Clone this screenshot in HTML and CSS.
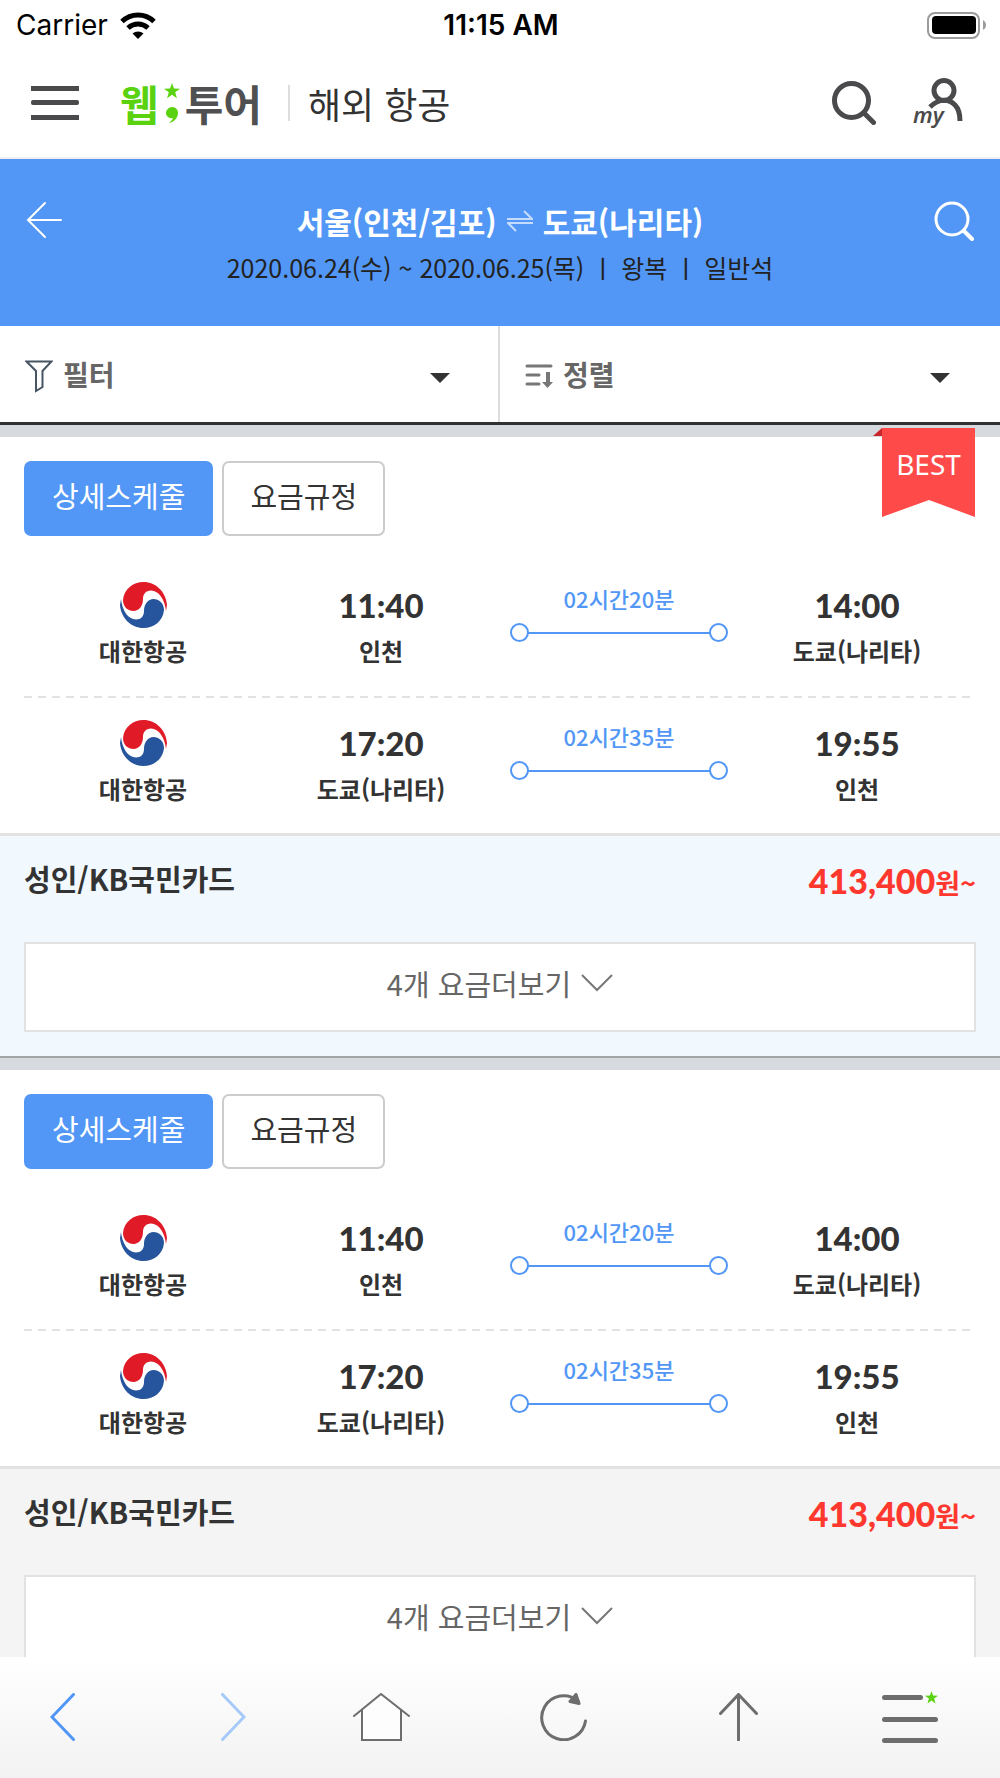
FILE: index.html
```
<!DOCTYPE html>
<html lang="ko">
<head>
    <meta charset="UTF-8">
    <meta name="viewport" content="width=device-width, initial-scale=1.0">
    <title>웹투어 해외 항공</title>
    <link rel="stylesheet" href="styles.css">
</head>
<body>
    <!-- shared icons -->
    <svg class="defs" width="0" height="0" aria-hidden="true">
        <symbol id="airline" viewBox="0 0 47 46">
            <path fill="#e01b27" d="M3 18C4 7 13 0 23.500 0 36 0 46 10 47 23l-1 6C45 18 39 8.500 31 8.500 26 8.500 23 12 23 17 23 24 19 29 13.500 29 8 29 3 25 3 18z"/>
            <path fill="#26559d" transform="rotate(180 23.500 23)" d="M3 18C4 7 13 0 23.500 0 36 0 46 10 47 23l-1 6C45 18 39 8.500 31 8.500 26 8.500 23 12 23 17 23 24 19 29 13.500 29 8 29 3 25 3 18z"/>
        </symbol>
        <symbol id="star" viewBox="0 0 14 14">
            <path d="M7 0l1.700 4.900L14 5l-4.200 3.200L11.300 13.400 7 10.300 2.700 13.400 4.200 8.200 0 5l5.300-.1z"/>
        </symbol>
        <symbol id="chevron" viewBox="0 0 32 18">
            <path fill="none" stroke="#777" stroke-width="2" d="M1 1l15 15L31 1"/>
        </symbol>
    </svg>

    <div class="app">
        <div class="status-bar">
            <div class="carrier">
                <span>Carrier</span>
                <svg width="36" height="27" viewBox="0 0 36 27">
                    <path fill="none" stroke="#000" stroke-width="5" d="M2 9.500C11 .800 25 .800 34 9.500M8 16c6-5.300 14-5.300 20 0"/>
                    <path d="M18 27l-5.500-5.500c3-2.800 8-2.800 11 0z"/>
                </svg>
            </div>
            <div class="clock">11:15 AM</div>
            <div class="battery">
                <svg width="59" height="27" viewBox="0 0 59 27">
                    <rect x="1" y="1" width="51" height="25" rx="7" fill="none" stroke="#9b9b9b" stroke-width="2"/>
                    <rect x="5" y="4" width="44" height="18" rx="4"/>
                    <path fill="#9b9b9b" d="M56 8c4 2 4 8 0 10z"/>
                </svg>
            </div>
        </div>

        <header class="header">
            <button type="button" class="icon-btn" aria-label="메뉴">
                <svg width="48" height="34" viewBox="0 0 48 34" fill="#4a4a4c">
                    <path d="M0 0h48v5H0zM0 29h48v5H0z"/>
                    <rect y="14" width="48" height="5" rx="2"/>
                </svg>
            </button>
            <a href="#" class="logo">
                <span class="logo-web">웹</span>
                <svg class="logo-mark" width="16" height="40" viewBox="0 0 16 40" fill="#5ad20f">
                    <use href="#star" width="16" height="16"/>
                    <path d="M8 24c4 0 6 3 6 6 0 5-4 9-9 10 2-2 4-4 4-5-4 1-7-2-7-5s3-6 6-6z"/>
                </svg>
                <span class="logo-tour">투어</span>
            </a>
            <h1 class="header-title">해외 항공</h1>
            <div class="header-icons">
                <button type="button" class="icon-btn" aria-label="검색">
                    <svg width="44" height="44" viewBox="0 0 44 44" fill="none" stroke="#4a4a4c" stroke-linecap="round">
                        <circle cx="19.500" cy="19.500" r="17" stroke-width="5"/>
                        <path stroke-width="5" d="M32 32l9.500 9.500"/>
                    </svg>
                </button>
                <button type="button" class="icon-btn" aria-label="my">
                    <svg width="50" height="50" viewBox="0 0 50 50" fill="none" stroke="#4a4a4c" stroke-width="5">
                        <circle cx="31" cy="12.500" r="10"/>
                        <path d="M17 29c8-8 18-9 25-2 3 3 5 8 5 16"/>
                        <text x="0" y="45" class="my-text">my</text>
                    </svg>
                </button>
            </div>
        </header>

        <main class="main">
            <section class="route">
                <button type="button" class="icon-btn" aria-label="뒤로">
                    <svg width="40" height="40" viewBox="0 0 40 40" fill="none" stroke="#fff" stroke-width="2" stroke-linecap="round">
                        <path d="M35 19H3M19 2L2 19l17 17"/>
                    </svg>
                </button>
                <div class="route-info">
                    <h2 class="route-title">
                        서울(인천/김포)
                        <svg width="26" height="22" viewBox="0 0 26 22" fill="none" stroke="#c5dcfc" stroke-width="2">
                            <path d="M0 9h25L17 1M26 13H1l8 8"/>
                        </svg>
                        도쿄(나리타)
                    </h2>
                    <p class="route-date">2020.06.24(수) ~ 2020.06.25(목) ㅣ 왕복 ㅣ 일반석</p>
                </div>
                <button type="button" class="icon-btn" aria-label="여정 검색">
                    <svg width="40" height="40" viewBox="0 0 40 40" fill="none" stroke="#fff" stroke-linecap="round">
                        <circle cx="18" cy="18" r="16" stroke-width="3"/>
                        <path stroke-width="4" d="M30 30l8 8"/>
                    </svg>
                </button>
            </section>

            <div class="tools">
                <button type="button" class="tool" aria-haspopup="true">
                    <svg width="28" height="33" viewBox="0 0 28 33" fill="none" stroke="#475563" stroke-width="2">
                        <path d="M1.500 1.500h25L17.500 11v16l-6.500 4V11z"/>
                    </svg>
                    <span>필터</span>
                    <i class="caret"></i>
                </button>
                <button type="button" class="tool" aria-haspopup="true">
                    <svg width="28" height="24" viewBox="0 0 28 24" fill="none" stroke="#777" stroke-width="3">
                        <path stroke-linecap="round" d="M2 2h24M2 11h12M2 20h12"/>
                        <path stroke-width="4" d="M23 8v11"/>
                        <path fill="#777" stroke="none" d="M17 18h11l-5.500 6z"/>
                    </svg>
                    <span>정렬</span>
                    <i class="caret"></i>
                </button>
            </div>

            <article class="card card-best">
                <div class="ribbon">
                    <svg width="102" height="89" viewBox="0 0 102 89">
                        <path fill="#c9262c" d="M0 8l9-8v8z"/>
                        <path fill="#ff4a4a" d="M9 0h93v89L56 72 9 89z"/>
                    </svg>
                    <span>BEST</span>
                </div>
                <div class="card-buttons">
                    <button type="button" class="btn btn-primary">상세스케줄</button>
                    <button type="button" class="btn">요금규정</button>
                </div>
                <div class="flights">
                    <div class="flight">
                        <div class="stop"><svg width="47" height="46"><use href="#airline"/></svg><span>대한항공</span></div>
                        <div class="stop"><b>11:40</b><span>인천</span></div>
                        <div class="duration"><span>02시간20분</span><div class="line"><i></i><i></i></div></div>
                        <div class="stop"><b>14:00</b><span>도쿄(나리타)</span></div>
                    </div>
                    <div class="flight">
                        <div class="stop"><svg width="47" height="46"><use href="#airline"/></svg><span>대한항공</span></div>
                        <div class="stop"><b>17:20</b><span>도쿄(나리타)</span></div>
                        <div class="duration"><span>02시간35분</span><div class="line"><i></i><i></i></div></div>
                        <div class="stop"><b>19:55</b><span>인천</span></div>
                    </div>
                </div>
                <div class="fare">
                    <div class="fare-row">
                        <span class="fare-name">성인/KB국민카드</span>
                        <span class="price"><strong>413,400</strong>원~</span>
                    </div>
                    <button type="button" class="more">4개 요금더보기 <svg width="32" height="18"><use href="#chevron"/></svg></button>
                </div>
            </article>

            <article class="card">
                <div class="card-buttons">
                    <button type="button" class="btn btn-primary">상세스케줄</button>
                    <button type="button" class="btn">요금규정</button>
                </div>
                <div class="flights">
                    <div class="flight">
                        <div class="stop"><svg width="47" height="46"><use href="#airline"/></svg><span>대한항공</span></div>
                        <div class="stop"><b>11:40</b><span>인천</span></div>
                        <div class="duration"><span>02시간20분</span><div class="line"><i></i><i></i></div></div>
                        <div class="stop"><b>14:00</b><span>도쿄(나리타)</span></div>
                    </div>
                    <div class="flight">
                        <div class="stop"><svg width="47" height="46"><use href="#airline"/></svg><span>대한항공</span></div>
                        <div class="stop"><b>17:20</b><span>도쿄(나리타)</span></div>
                        <div class="duration"><span>02시간35분</span><div class="line"><i></i><i></i></div></div>
                        <div class="stop"><b>19:55</b><span>인천</span></div>
                    </div>
                </div>
                <div class="fare">
                    <div class="fare-row">
                        <span class="fare-name">성인/KB국민카드</span>
                        <span class="price"><strong>413,400</strong>원~</span>
                    </div>
                    <button type="button" class="more">4개 요금더보기 <svg width="32" height="18"><use href="#chevron"/></svg></button>
                </div>
            </article>
        </main>

        <nav class="bottom-nav">
            <a href="#" aria-label="이전">
                <svg width="25" height="48" viewBox="0 0 25 48" fill="none" stroke="#4f96f6" stroke-width="3" stroke-linecap="round"><path d="M23.500 1.500L2 24l21.500 22.500"/></svg>
            </a>
            <a href="#" aria-label="다음">
                <svg width="25" height="48" viewBox="0 0 25 48" fill="none" stroke="#a5caf9" stroke-width="3" stroke-linecap="round"><path d="M1.500 1.500L23 24 1.500 46.500"/></svg>
            </a>
            <a href="#" aria-label="홈">
                <svg width="57" height="48" viewBox="0 0 57 48" fill="none" stroke="#6d6d6d" stroke-width="2" stroke-linecap="round">
                    <path fill="#fdfdfd" stroke="none" d="M9 17L28 2l20 15v30H9z"/>
                    <path d="M1 23L28 1l28 22M9 17v30h39V17"/>
                </svg>
            </a>
            <a href="#" aria-label="새로고침">
                <svg width="47" height="48" viewBox="0 0 47 48" fill="none" stroke="#6d6d6d" stroke-width="3" stroke-linecap="round">
                    <path d="M45.500 28A22 22 0 1 1 38 8"/>
                    <path fill="#6d6d6d" stroke-linejoin="round" d="M36 1.500l3 9-9-2z"/>
                </svg>
            </a>
            <a href="#" aria-label="맨 위로">
                <svg width="39" height="48" viewBox="0 0 39 48" fill="none" stroke="#6d6d6d" stroke-width="3" stroke-linecap="round"><path d="M19.500 47V2M1.500 20.500l18-19 18 19"/></svg>
            </a>
            <a href="#" aria-label="전체 메뉴">
                <svg width="56" height="52" viewBox="0 0 56 52" fill="#6d6d6d">
                    <rect y="4" width="41" height="5" rx="2.500"/>
                    <rect y="26" width="56" height="5" rx="2.500"/>
                    <rect y="47" width="56" height="5" rx="2.500"/>
                    <use href="#star" x="43" width="13" height="13" fill="#5ad20f"/>
                </svg>
            </a>
        </nav>
    </div>
</body>
</html>
```

FILE: styles.css
```
* {
    box-sizing: border-box;
}
body {
    margin: 0;
    font-family: "Noto Sans CJK KR", sans-serif;
    color: #333;
    background-color: #fff;
}
button {
    font-family: inherit;
    color: inherit;
    cursor: pointer;
}
svg {
    display: block;
    flex-shrink: 0;
}
.defs {
    position: absolute;
}
.app {
    display: flex;
    flex-direction: column;
    height: 100vh;
}

/* Status bar */
.status-bar {
    display: grid;
    grid-template-columns: 1fr auto 1fr;
    align-items: center;
    height: 50px;
    padding: 0 14px 0 16px;
    font-family: Inter, sans-serif;
    font-size: 28px;
    line-height: 50px;
    color: #000;
}
.carrier {
    display: flex;
    align-items: center;
    gap: 12px;
}
.clock {
    font-weight: 600;
}
.battery {
    justify-self: end;
}

/* Header */
.header {
    display: flex;
    align-items: center;
    flex-shrink: 0;
    height: 109px;
    padding: 0 37px 2px 31px;
    border-bottom: 2px solid #f1eeee;
}
.icon-btn {
    padding: 0;
    border: 0;
    background: none;
}
.logo {
    display: flex;
    align-items: center;
    gap: 5px;
    margin-left: 41px;
    font-size: 42px;
    line-height: 60px;
    font-weight: bold;
    text-decoration: none;
}
.logo-web {
    color: #5ad20f;
}
.logo-tour {
    color: #505052;
}
.header-title {
    margin: 0 0 0 26px;
    padding-left: 18px;
    border-left: 2px solid #ddd;
    font-size: 36px;
    line-height: 36px;
    font-weight: normal;
}
.header-icons {
    display: flex;
    align-items: center;
    gap: 37px;
    margin-left: auto;
}
.my-text {
    font-family: "Noto Sans", sans-serif;
    font-size: 22px;
    font-weight: 600;
    font-style: italic;
    fill: #4a4a4c;
    stroke: #fff;
    stroke-width: 3px;
    paint-order: stroke;
}

/* Content */
.main {
    flex: 1;
    min-height: 0;
    overflow-y: auto;
    scrollbar-width: none;
}
.route {
    display: flex;
    justify-content: space-between;
    align-items: flex-start;
    height: 167px;
    padding: 42px 26px 0 26px;
    background-color: #5297f6;
}
.route-info {
    text-align: center;
}
.route-title {
    display: flex;
    justify-content: center;
    align-items: center;
    gap: 10px;
    margin: 0;
    font-size: 30px;
    line-height: 40px;
    font-weight: 600;
    color: #fff;
}
.route-date {
    margin: 6px 0 0;
    font-size: 25px;
    line-height: 40px;
    color: #222;
}
.tools {
    display: grid;
    grid-template-columns: 1fr 1fr;
    height: 99px;
    border-bottom: 3px solid #2f3133;
}
.tool {
    display: flex;
    align-items: center;
    gap: 10px;
    padding: 0 48px 0 25px;
    border: 0;
    border-right: 2px solid #ddd;
    background-color: #fff;
    font-size: 28px;
    font-weight: 600;
    color: #666;
}
.tool:last-child {
    border-right-color: transparent;
}
.tool svg,
.caret {
    margin-top: 4px;
}
.caret {
    margin-top: 8px;
    margin-left: auto;
    border: 10px solid transparent;
    border-top-color: #333;
    border-bottom: 0;
}

/* Flight card */
.card {
    position: relative;
    border-top: 12px solid #d6d9de;
}
.ribbon {
    position: absolute;
    top: -9px;
    right: 25px;
}
.ribbon span {
    position: absolute;
    top: 16px;
    right: 0;
    width: 93px;
    font-family: "Noto Sans", sans-serif;
    font-size: 28px;
    line-height: 40px;
    text-align: center;
    color: #fff;
}
.card-buttons {
    display: flex;
    gap: 9px;
    padding: 24px 24px 0;
}
.btn {
    height: 75px;
    padding: 0 26px 8px;
    border: 2px solid #ccc;
    border-radius: 7px;
    background-color: #fff;
    font-size: 29px;
}
.btn-primary {
    padding: 0 28px 8px;
    border: 0;
    background-color: #5297f6;
    color: #fff;
}
.flights {
    padding: 24px 24px 0;
}
.flight {
    display: grid;
    grid-template-columns: repeat(4, 1fr);
    height: 135px;
    padding-top: 22px;
}
/* dashed divider between the two legs */
.flight:first-child {
    height: 138px;
    background: repeating-linear-gradient(90deg, #e2e2e2 0 8px, transparent 8px 14px) bottom / 100% 2px no-repeat;
}
.stop {
    display: flex;
    flex-direction: column;
    align-items: center;
    gap: 8px;
    font-size: 24px;
    line-height: 30px;
    font-weight: 600;
}
.stop b {
    font-family: Lato, sans-serif;
    font-size: 33px;
    line-height: 46px;
}
.duration {
    display: flex;
    flex-direction: column;
    gap: 10px;
    padding: 1px 10px 0;
    font-size: 22px;
    line-height: 30px;
    text-align: center;
    font-weight: 500;
    color: #5297f6;
}
.line {
    display: flex;
    justify-content: space-between;
    background: linear-gradient(#5297f6, #5297f6) center / calc(100% - 36px) 2px no-repeat;
}
.line i {
    width: 19px;
    height: 19px;
    border: 2px solid #5297f6;
    border-radius: 50%;
}
.fare {
    height: 225px;
    padding: 0 24px;
    border-top: 3px solid #e2e2e2;
    border-bottom: 2px solid #a3a5a7;
    background-color: #f4f4f4;
}
.card-best .fare {
    background-color: #f1f8fe;
}
.fare-row {
    display: flex;
    justify-content: space-between;
    align-items: flex-start;
    height: 106px;
    padding-top: 22px;
    font-weight: 600;
}
.fare-name {
    font-size: 29px;
    line-height: 40px;
}
.price {
    font-size: 27px;
    line-height: 46px;
    color: #ff382f;
}
.price strong {
    font-family: Lato, sans-serif;
    font-size: 34px;
}
.more {
    display: flex;
    justify-content: center;
    align-items: center;
    gap: 10px;
    width: 100%;
    height: 90px;
    padding: 0 0 8px;
    border: 2px solid #e2e2e2;
    background-color: #fff;
    font-size: 29px;
    color: #666;
}

/* Bottom navigation */
.bottom-nav {
    display: grid;
    grid-template-columns: 171fr 132fr 187fr 179fr 163fr 56fr;
    align-items: center;
    flex-shrink: 0;
    height: 121px;
    padding: 0 62px 2px 50px;
    background: linear-gradient(#fff, #f2f2f2);
}
```
